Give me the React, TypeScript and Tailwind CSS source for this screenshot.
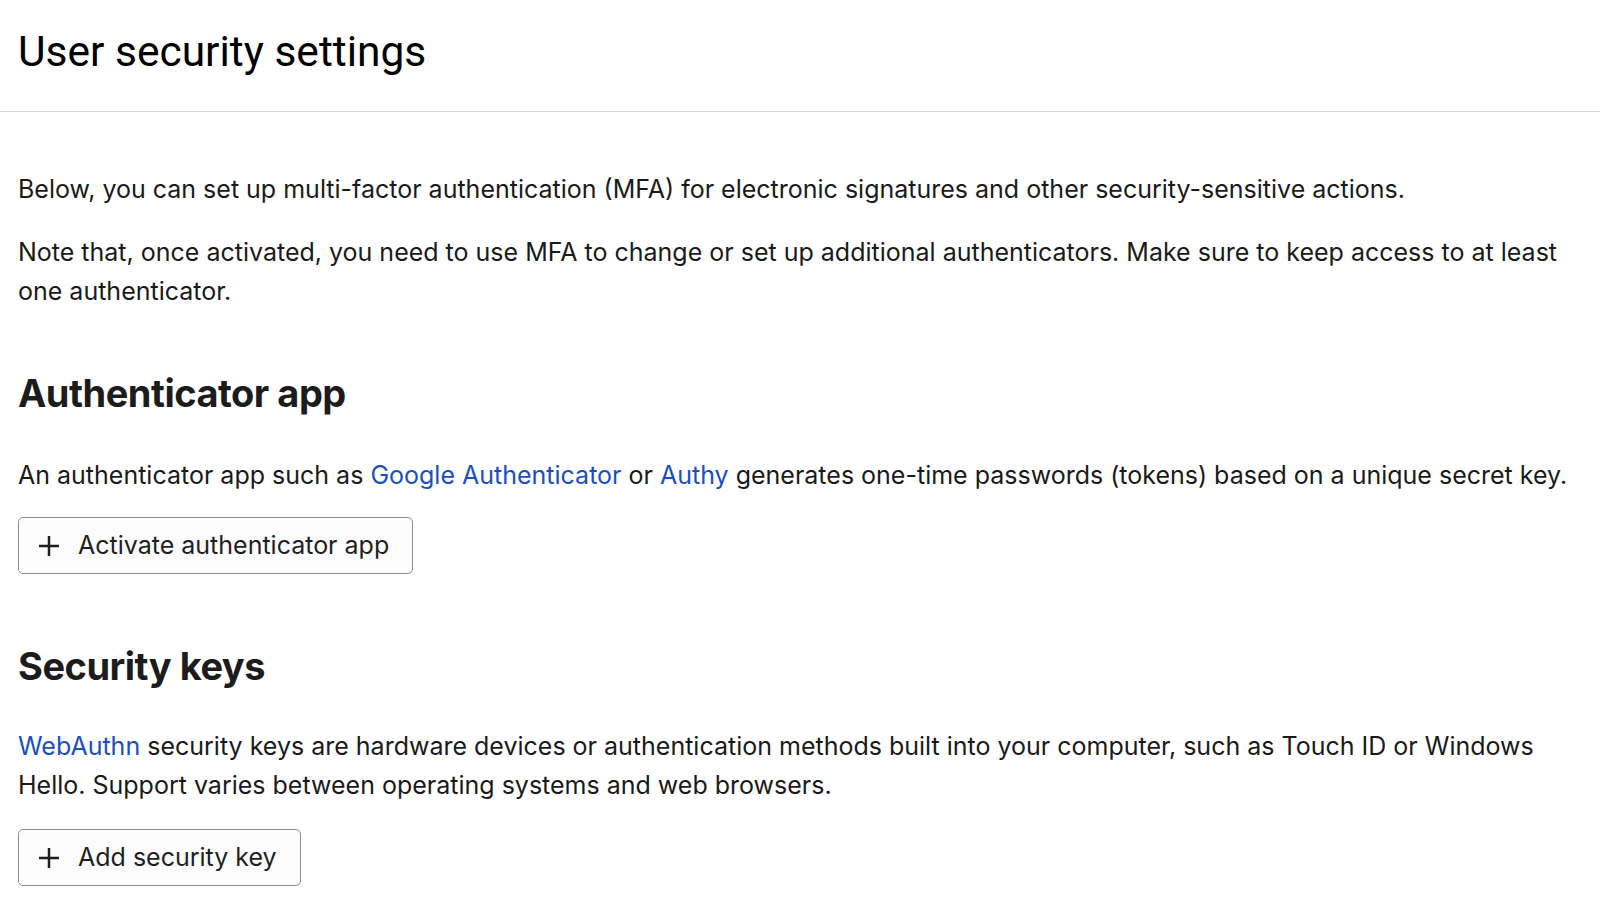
const link = "text-[#1a4fc4] hover:underline";

const PlusIcon = () => (
  <svg width="22" height="22" viewBox="0 0 22 22" className="shrink-0">
    <path d="M11 1v20M1 11h20" stroke="#1f1f1f" strokeWidth="2.5" strokeLinecap="butt" />
  </svg>
);

const AddButton = ({ label }: { label: string }) => (
  <button className="flex items-center gap-[18px] h-[57px] pl-[19px] pr-[23px] border border-[#8e8e8e] rounded-[5px] bg-[#fcfcfc] text-[25px] text-[#1f1f1f]">
    <PlusIcon />
    <span>{label}</span>
  </button>
);

export default function App() {
  return (
    <div className="min-h-screen bg-white font-['Inter','Noto_Sans',sans-serif] text-[#1a1a1a]">
      <header className="h-[112px] border-b border-[#d6d6d6] px-[18px] flex items-center">
        <h1 className="font-['Roboto','Liberation_Sans',sans-serif] text-[42.5px] text-black pb-[8px]">
          User security settings
        </h1>
      </header>

      <main className="px-[18px] pt-[58px] text-[25px] leading-[39px]">
        <p>
          Below, you can set up multi-factor authentication (MFA) for electronic signatures and other
          security-sensitive actions.
        </p>
        <p className="mt-[24px]">
          Note that, once activated, you need to use MFA to change or set up additional authenticators.
          Make sure to keep access to at least one authenticator.
        </p>

        <section className="mt-[58px]">
          <h2 className="text-[38px] font-bold leading-[48px] tracking-[-0.5px] text-[#1c1c1c]">Authenticator app</h2>
          <p className="mt-[39px]">
            An authenticator app such as <a className={link} href="#">Google Authenticator</a> or{" "}
            <a className={link} href="#">Authy</a> generates one-time passwords (tokens) based on a unique secret key.
          </p>
          <div className="mt-[22px]">
            <AddButton label="Activate authenticator app" />
          </div>
        </section>

        <section className="mt-[68px]">
          <h2 className="text-[38px] font-bold leading-[48px] tracking-[-0.5px] text-[#1c1c1c]">Security keys</h2>
          <p className="mt-[37px]">
            <a className={link} href="#">WebAuthn</a> security keys are hardware devices or authentication methods
            built into your computer, such as Touch ID or Windows Hello. Support varies between operating systems
            and web browsers.
          </p>
          <div className="mt-[24px]">
            <AddButton label="Add security key" />
          </div>
        </section>
      </main>
    </div>
  );
}
